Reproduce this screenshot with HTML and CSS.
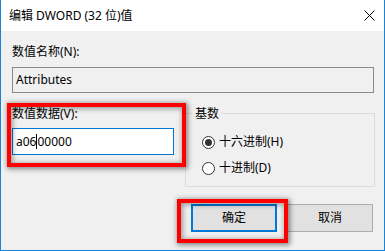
FILE: index.html
```html
<!DOCTYPE html>
<html lang="zh-CN">
<head>
<meta charset="utf-8">
<title>编辑 DWORD (32 位)值</title>
<link rel="stylesheet" href="styles.css">
</head>
<body>
<div class="window">
  <div class="titlebar">
    <span class="title">编辑 DWORD (32 位)值</span>
    <svg class="close" width="11" height="11" viewBox="0 0 11 11" aria-label="关闭">
      <path d="M0.5 0.5 L10.5 10.5 M10.5 0.5 L0.5 10.5" stroke="#000" stroke-width="1" fill="none"/>
    </svg>
  </div>
  <div class="content">
    <div class="label">数值名称(N):</div>
    <div class="field readonly">Attributes</div>
    <div class="row">
      <div class="datacol">
        <div class="label">数值数据(V):</div>
        <div class="field active">a06<span class="caret"></span>00000</div>
        <span class="mark mark-data"></span>
      </div>
      <fieldset class="base">
        <legend>基数</legend>
        <div class="radio"><span class="dot checked"></span><span>十六进制(H)</span></div>
        <div class="radio"><span class="dot"></span><span>十进制(D)</span></div>
      </fieldset>
    </div>
    <div class="buttons">
      <div class="btnwrap">
        <div class="btn default">确定</div>
        <span class="mark mark-ok"></span>
      </div>
      <div class="btn">取消</div>
    </div>
  </div>
</div>
</body>
</html>
```

FILE: styles.css
```css
* { box-sizing: border-box; }
html, body { margin: 0; padding: 0; }
body {
  font-family: "Noto Sans", "Noto Sans CJK SC", sans-serif;
  font-size: 12px;
  line-height: 16px;
  color: #000;
  background: #f0f0f0;
}
.window {
  position: relative;
  width: 385px;
  height: 251px;
  background: #f0f0f0;
  border: 1px solid #1883d7;
  border-top: none;
  display: flex;
  flex-direction: column;
}
.titlebar {
  height: 31px;
  background: #fff;
  display: flex;
  align-items: center;
  padding-left: 8px;
  padding-right: 9px;
}
.title { flex: 1; }
.close { display: block; margin-top: -1px; }
.content {
  padding: 13px 9px 0 11px;
  display: flex;
  flex-direction: column;
}
.label { height: 16px; }
.field {
  height: 26px;
  border: 1px solid #8a8a8a;
  padding: 0 3px;
  display: flex;
  align-items: center;
  white-space: pre;
}
.readonly {
  margin-top: 7px;
  width: 362px;
  background: #f0f0f0;
}
.row {
  margin-top: 13px;
  display: flex;
  align-items: flex-start;
}
.datacol {
  position: relative;
  width: 162px;
}
.active {
  margin-top: 6px;
  height: 27px;
  background: #fff;
  border-color: #0078d7;
}
.caret {
  display: inline-block;
  width: 1px;
  height: 15px;
  background: #000;
}
.base {
  margin: 0 0 0 auto;
  width: 190px;
  height: 81px;
  padding: 0;
  border: 1px solid #dcdcdc;
}
.base legend {
  margin-left: 7px;
  padding: 0 2px;
  line-height: 15px;
}
.radio {
  display: flex;
  align-items: center;
  gap: 4px;
  margin-left: 16px;
  height: 16px;
}
.radio:first-of-type { margin-top: 13px; }
.radio + .radio { margin-top: 10px; }
.dot {
  width: 13px;
  height: 13px;
  border: 1px solid #333;
  border-radius: 50%;
  background: #fff;
  display: flex;
  align-items: center;
  justify-content: center;
}
.dot.checked::after {
  content: "";
  width: 7px;
  height: 7px;
  border-radius: 50%;
  background: #333;
}
.buttons {
  margin-top: 17px;
  display: flex;
  justify-content: flex-end;
  gap: 10px;
  padding-right: 2px;
}
.btnwrap { position: relative; }
.btn {
  width: 86px;
  height: 28px;
  background: #e1e1e1;
  border: 1px solid #adadad;
  display: flex;
  align-items: center;
  justify-content: center;
}
.btn.default { border: 2px solid #0078d7; }
.mark {
  position: absolute;
  border: 4px solid #ff0000;
  box-shadow: 1px 1px 5px 1px rgba(0,0,0,0.45), inset 1px 1px 5px 1px rgba(0,0,0,0.35);
  pointer-events: none;
}
.mark-data { top: -3px; left: -5px; right: -12px; bottom: -12px; }
.mark-ok { top: -5px; left: -14px; right: -11px; bottom: -11px; }
```
